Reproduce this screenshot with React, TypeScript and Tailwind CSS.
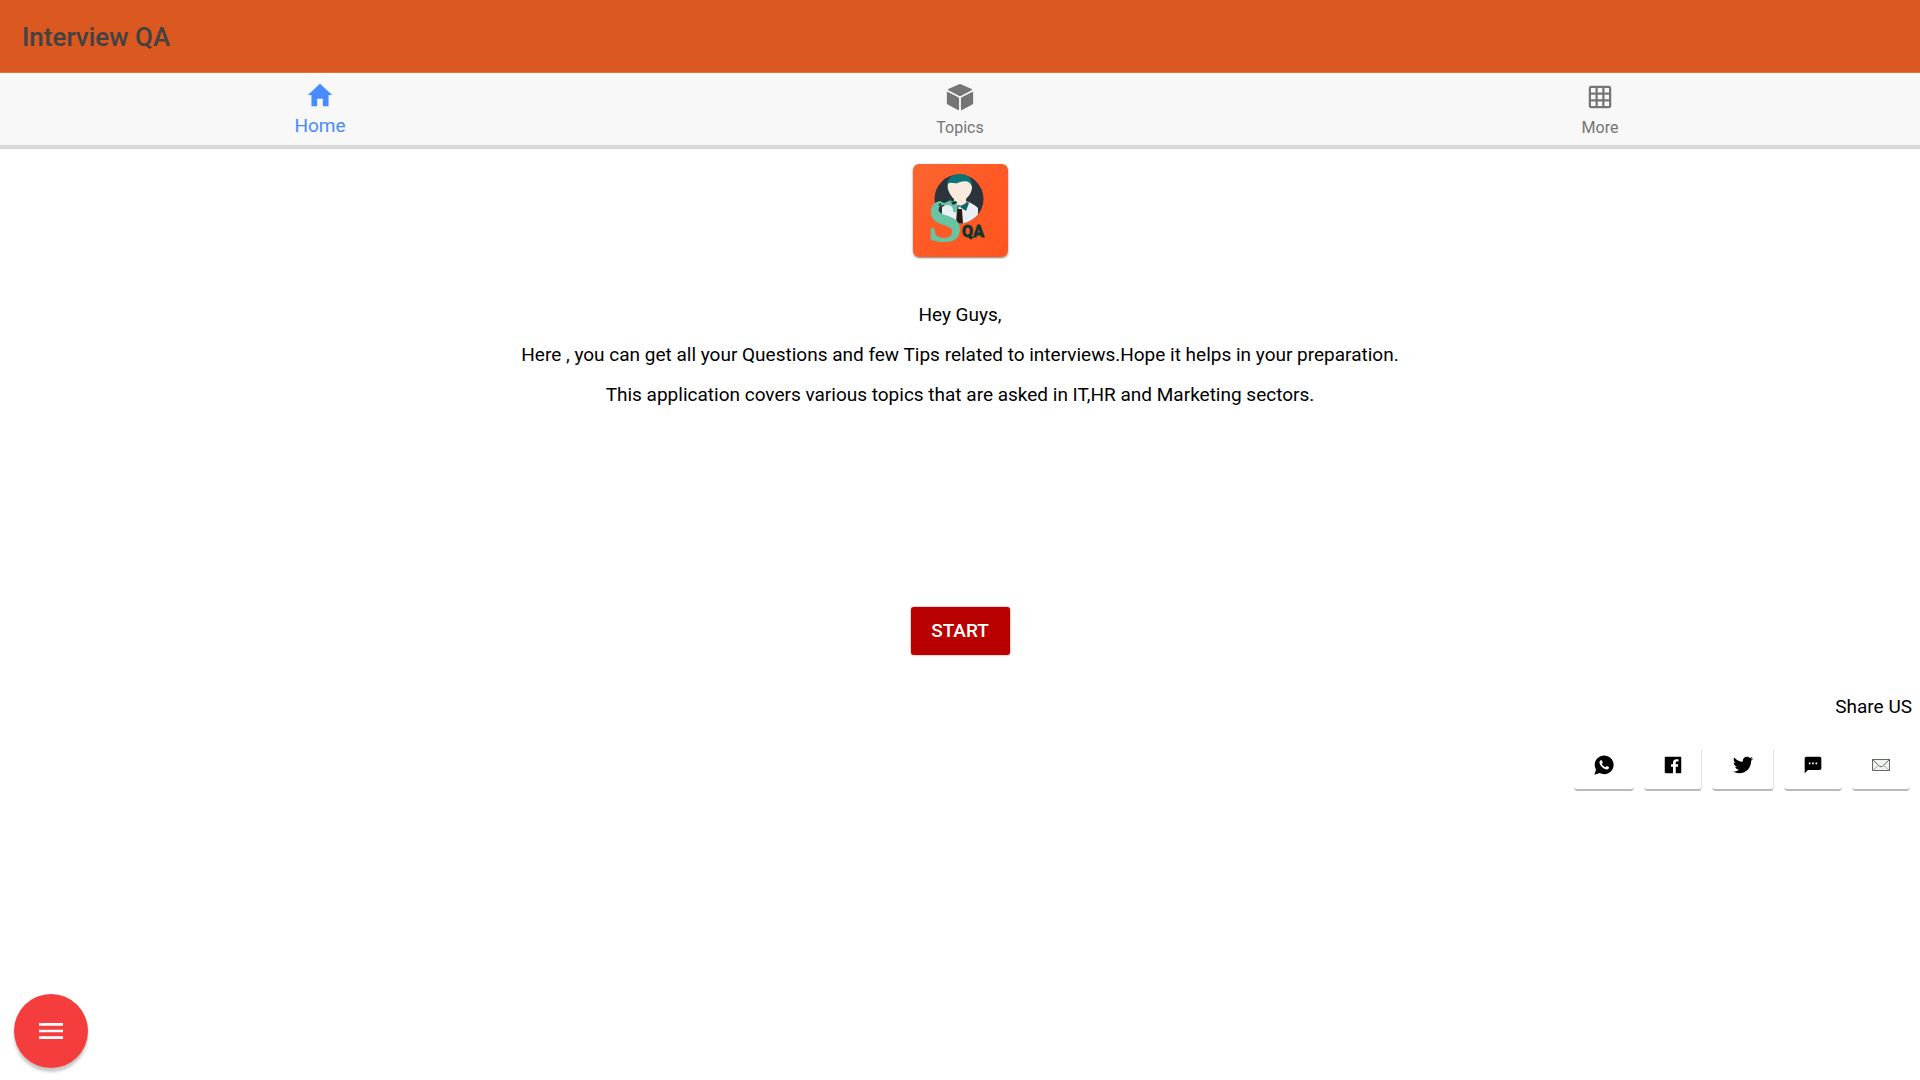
import type { ReactNode } from 'react';
import { IoLogoFacebook, IoLogoTwitter, IoLogoWhatsapp, IoMdCube, IoMdGrid, IoMdHome, IoMdMenu } from 'react-icons/io';
import { MdSms } from 'react-icons/md';

interface ShareLink {
  label: string;
  icon: ReactNode;
  className: string;
}

const EnvelopeIcon = () => (
  <svg className="w-[18px] h-3" viewBox="0 0 18 12" fill="#f1f3f1" stroke="#666" strokeWidth="1">
    <rect x="0.5" y="0.5" width="17" height="11" />
    <path d="M0.5 0.5L7.5 7.2Q9 8.4 10.5 7.2L17.5 0.5" fill="none" />
    <path d="M0.5 11.5L6.5 6.4M17.5 11.5L11.5 6.4" fill="none" stroke="#aaa" />
  </svg>
);

const shareLinks: ShareLink[] = [
  { label: 'WhatsApp', icon: <IoLogoWhatsapp className="size-[22px]" />, className: 'w-[60px]' },
  { label: 'Facebook', icon: <IoLogoFacebook className="size-[22px]" />, className: 'w-[58px] border-r border-r-[#e4e4e4]' },
  { label: 'Twitter', icon: <IoLogoTwitter className="size-[22px]" />, className: 'w-[62px] border-r border-r-[#e4e4e4]' },
  { label: 'SMS', icon: <MdSms className="size-5" />, className: 'w-[58px]' },
  { label: 'Email', icon: <EnvelopeIcon />, className: 'w-[58px]' },
];

const AppLogo = () => (
  <svg className="w-[95px] h-[93px] rounded-md shadow-[0_1px_2px_rgba(0,0,0,0.5)]" viewBox="0 0 95 93" role="img" aria-label="SQA">
    <defs>
      <linearGradient id="logoBg" x1="0" y1="0" x2="1" y2="1">
        <stop offset="0" stopColor="#fb6530" />
        <stop offset="0.5" stopColor="#ff5a25" />
        <stop offset="1" stopColor="#ff551f" />
      </linearGradient>
      <clipPath id="badge">
        <circle cx="46" cy="35" r="24.5" />
      </clipPath>
    </defs>
    <rect width="95" height="93" fill="url(#logoBg)" />
    <circle cx="46" cy="35" r="24.5" fill="#2d333b" />
    <g clipPath="url(#badge)">
      <path d="M29 60V43Q35 39 40 37L46 43L53 37Q61 40 65 44V60Z" fill="#e9eff4" />
      <path d="M36 39L40 37L46 44L43 47ZM52 37L56 39L53 47L47 43Z" fill="#12666a" />
      <path d="M44 45H49L50 60H43Z" fill="#2b1917" />
    </g>
    <path d="M34 25C33 15 38 10 47 10C56 10 60 16 59 25L56 29H37Z" fill="#0b7476" />
    <path d="M35 20C38 17 42 21 47 18C51 17 57 16 59 23C59 28 56 32 53 35V39Q46 44 41 39V35C37 31 34 26 35 20Z" fill="#f8eadc" />
    <text x="32" y="77" textAnchor="middle" fontFamily="'Liberation Serif', serif" fontWeight="700" fontSize="61" fill="#68c4a2" stroke="#68c4a2" strokeWidth="1">S</text>
    <path d="M27 37L33 35L36 37L31 39ZM25 41L28 39L28 42ZM38 38L43 37L44 39L40 41Z" fill="#17383b" />
    <text x="60" y="73" textAnchor="middle" fontFamily="'Roboto', sans-serif" fontWeight="700" fontSize="16" fill="#12362f" stroke="#12362f" strokeWidth="1">QA</text>
  </svg>
);

export default function App() {
  return (
    <div className="min-h-screen flex flex-col bg-white text-black font-['Roboto',sans-serif]">
      <header className="h-[73px] flex items-center px-[22px] pt-px bg-[#db5820] border-b border-[#e0763f]">
        <h1 className="text-[26px] leading-8 font-medium text-[#424242]">Interview QA</h1>
      </header>

      {/* Tabs */}
      <nav className="grid grid-cols-3 h-[76px] bg-[#f8f8f8] border-b-4 border-[#d9d9d9] text-[#757575]">
        <a href="#home" className="flex flex-col items-center pt-[7px] text-[#488aff]">
          <IoMdHome className="size-[30px]" />
          <span className="text-[19px] leading-8">Home</span>
        </a>
        <a href="#topics" className="flex flex-col items-center pt-[9px]">
          <IoMdCube className="size-[30px]" />
          <span className="text-base leading-8">Topics</span>
        </a>
        <a href="#more" className="flex flex-col items-center pt-[9px]">
          <IoMdGrid className="size-[30px]" />
          <span className="text-base leading-8">More</span>
        </a>
      </nav>

      <main className="flex-1 flex flex-col items-center pt-[15px]">
        <AppLogo />
        <div className="mt-[38px] text-center text-[19px] leading-10">
          <p>Hey Guys,</p>
          <p>Here , you can get all your Questions and few Tips related to interviews.Hope it helps in your preparation.</p>
          <p>This application covers various topics that are asked in IT,HR and Marketing sectors.</p>
        </div>
        <button
          type="button"
          className="mt-48 h-12 w-[99px] rounded-[3px] bg-[#b80000] text-[19px] font-medium text-white shadow-[0_0_2px_rgba(184,0,0,0.6)]"
        >
          START
        </button>

        {/* Share row */}
        <section className="self-end mt-9 flex flex-col items-end">
          <h2 className="pr-2 text-[19px] leading-8">Share US</h2>
          <div className="mt-[26px] pr-[10px] flex gap-[10px]">
            {shareLinks.map((link) => (
              <button
                key={link.label}
                type="button"
                aria-label={link.label}
                className={`h-[42px] flex items-center justify-center pb-2 rounded-b-sm border-b-2 border-b-[#b9b9b9] ${link.className}`}
              >
                {link.icon}
              </button>
            ))}
          </div>
        </section>
      </main>

      <button
        type="button"
        aria-label="Open menu"
        className="fixed left-[14px] bottom-3 size-[74px] rounded-full bg-[#f53d3d] text-white flex items-center justify-center shadow-[0_4px_3px_rgba(0,0,0,0.22)]"
      >
        <IoMdMenu className="size-8" />
      </button>
    </div>
  );
}
